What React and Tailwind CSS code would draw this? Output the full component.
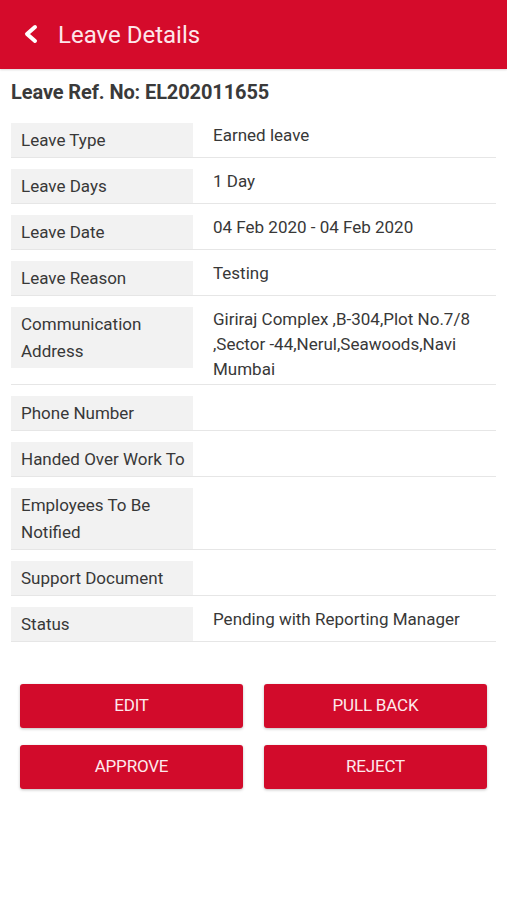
import React from "react";

const rows = [
  { label: "Leave Type", value: "Earned leave" },
  { label: "Leave Days", value: "1 Day" },
  { label: "Leave Date", value: "04 Feb 2020 - 04 Feb 2020" },
  { label: "Leave Reason", value: "Testing" },
  {
    label: "Communication Address",
    value: "Giriraj Complex ,B-304,Plot No.7/8 ,Sector -44,Nerul,Seawoods,Navi Mumbai",
  },
  { label: "Phone Number", value: "" },
  { label: "Handed Over Work To", value: "" },
  { label: "Employees To Be Notified", value: "" },
  { label: "Support Document", value: "" },
  { label: "Status", value: "Pending with Reporting Manager" },
];

function Btn({ children }) {
  return (
    <button className="h-[44px] rounded-[3px] bg-[#d20b2b] text-[17px] text-[#fde9ec] uppercase shadow-[0_1px_3px_rgba(0,0,0,0.25)] tracking-[-0.2px]">
      {children}
    </button>
  );
}

export default function App() {
  return (
    <div className="w-[507px] h-[900px] bg-white font-['Roboto',sans-serif] text-[#333]">
      <div className="h-[69px] bg-[#d50b2b] flex items-center shadow-[0_1px_2px_rgba(0,0,0,0.15)]">
        <svg width="16" height="20" viewBox="0 0 16 20" className="ml-[22px] mt-[-1px]">
          <polyline
            points="13,3 5,10 13,17"
            fill="none"
            stroke="#fff"
            strokeWidth="4"
            strokeLinecap="round"
            strokeLinejoin="round"
          />
        </svg>
        <span className="ml-[20px] text-[24px] text-[#fde6ea] leading-none">Leave Details</span>
      </div>

      <div className="px-[11px]">
        <div className="mt-[11px] text-[20px] leading-[24px] font-bold text-[#3a3a3a] tracking-[-0.1px]">
          Leave Ref. No: EL202011655
        </div>

        <div className="mt-[19px] flex flex-col gap-[11px]">
          {rows.map((r) => (
            <div key={r.label} className="flex items-start border-b border-[#e6e6e6] text-[17px]">
              <div className="w-[182px] shrink-0 bg-[#f2f2f2] pl-[10px] pr-[4px] pt-[4px] pb-[3px] leading-[27px] text-[#383838]">
                {r.label}
              </div>
              <div className="flex-1 pl-[20px] pr-[8px] leading-[25px] pb-[2px] text-[#383838]">
                {r.value}
              </div>
            </div>
          ))}
        </div>
      </div>

      <div className="mt-[42px] px-[20px] grid grid-cols-2 gap-x-[21px] gap-y-[17px]">
        <Btn>Edit</Btn>
        <Btn>Pull Back</Btn>
        <Btn>Approve</Btn>
        <Btn>Reject</Btn>
      </div>
    </div>
  );
}
